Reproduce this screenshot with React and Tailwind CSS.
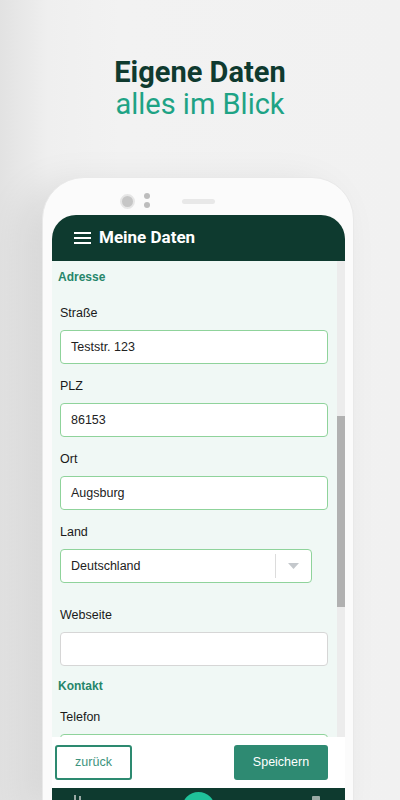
import React from 'react';

function Field({ label, value, border = 'border-[#8fd39b]', mt = 'mt-[15px]' }) {
    return (
        <div className={mt}>
            <div className="ml-[2px] h-[14px] text-[12.5px] leading-[14px] text-[#1a1a1a]">{label}</div>
            <div className={`mt-[10px] ml-[2px] flex h-[34px] w-[268px] items-center rounded-[4px] border bg-white px-[10px] text-[12.5px] text-[#222] ${border}`}>
                {value}
            </div>
        </div>
    );
}

function SelectField({ label, value }) {
    return (
        <div className="mt-[15px]">
            <div className="ml-[2px] h-[14px] text-[12.5px] leading-[14px] text-[#1a1a1a]">{label}</div>
            <div className="mt-[10px] ml-[2px] flex h-[34px] w-[252px] items-center rounded-[4px] border border-[#8fd39b] bg-white pl-[10px] text-[12.5px] text-[#222]">
                <span className="flex-1">{value}</span>
                <span className="h-[24px] w-px bg-[#dcdcdc]" />
                <span className="flex w-[35px] justify-center">
                    <svg width="11" height="6" viewBox="0 0 11 6">
                        <path d="M0 0h11L5.5 6z" fill="#c4c8cc" />
                    </svg>
                </span>
            </div>
        </div>
    );
}

export default function App() {
    return (
        <div className="relative h-[800px] w-[400px] overflow-hidden bg-[linear-gradient(to_right,#e2e2e2_0%,#efefef_12%,#f2f2f2_30%,#f1f1f1_100%)]">
            {/* Headline */}
            <div className="pt-[56px] text-center font-['Roboto',sans-serif] text-[29px] leading-[32px]">
                <div className="font-bold text-[#0f3a2f]">Eigene Daten</div>
                <div className="text-[#1ea385]">alles im Blick</div>
            </div>

            {/* Phone */}
            <div className="mt-[57px] ml-[42px] w-[312px] rounded-t-[42px] border border-[#e9e9e9] bg-[#fbfbfb] pl-[9px] pr-[8px] shadow-[-18px_10px_40px_rgba(0,0,0,0.10)]">
                <div className="relative flex h-[37px] items-center">
                    <div className="absolute top-[16px] left-[68px] h-[15px] w-[15px] rounded-full border-[2px] border-[#e6e6e6] bg-[#c6c6c6]" />
                    <div className="absolute top-[15px] left-[92px] h-[6px] w-[6px] rounded-full bg-[#bdbdbd]" />
                    <div className="absolute top-[24px] left-[92px] h-[6px] w-[6px] rounded-full bg-[#bdbdbd]" />
                    <div className="absolute top-[21px] left-[130px] h-[5px] w-[33px] rounded-full bg-[#e8e8e8]" />
                </div>

                {/* Screen */}
                <div className="flex w-[293px] flex-col overflow-hidden">
                    <div className="flex h-[46px] items-center rounded-t-[24px] bg-[#0e3a2f] pl-[22px] font-['Roboto',sans-serif]">
                        <svg width="17" height="14" viewBox="0 0 17 14">
                            <rect x="0" y="1" width="17" height="2" fill="#fff" />
                            <rect x="0" y="6" width="17" height="2" fill="#fff" />
                            <rect x="0" y="11" width="17" height="2" fill="#fff" />
                        </svg>
                        <span className="ml-[8px] text-[17px] font-bold text-white">Meine Daten</span>
                    </div>

                    <div className="flex h-[476px] font-['Liberation_Sans',Arial,sans-serif]">
                        <div className="w-[285px] overflow-hidden bg-[#f0f8f5] pt-[8px] pl-[6px]">
                            <div className="h-[16px] text-[12px] font-bold leading-[16px] text-[#26866b]">Adresse</div>
                            <Field label="Straße" value="Teststr. 123" mt="mt-[21px]" />
                            <Field label="PLZ" value="86153" />
                            <Field label="Ort" value="Augsburg" />
                            <SelectField label="Land" value="Deutschland" />
                            <Field label="Webseite" value="" border="border-[#d6d6d6]" mt="mt-[25px]" />
                            <div className="mt-[12px] h-[16px] text-[12px] font-bold leading-[16px] text-[#26866b]">Kontakt</div>
                            <Field label="Telefon" value="" mt="mt-[16px]" />
                        </div>
                        <div className="w-[8px] bg-[#ececec] pt-[155px]">
                            <div className="h-[191px] bg-[#b1b1b1]" />
                        </div>
                    </div>

                    <div className="flex h-[51px] items-center justify-between bg-white pl-[3px] pr-[17px] font-['Liberation_Sans',Arial,sans-serif] text-[12.5px]">
                        <button className="h-[35px] w-[77px] rounded-[3px] border-[2px] border-[#2d8a70] bg-white text-[#3d937d]">zurück</button>
                        <button className="h-[35px] w-[94px] rounded-[3px] bg-[#2e8a72] text-white">Speichern</button>
                    </div>

                    <div className="relative flex h-[20px] justify-center bg-[#0e3a2f]">
                        <div className="mt-[4px] h-[33px] w-[33px] rounded-full bg-[#1fc29a]" />
                        <div className="absolute top-[7px] left-[22px] h-[6px] w-[2px] bg-[#9aa9a4]" />
                        <div className="absolute top-[8px] left-[27px] h-[5px] w-[2px] bg-[#9aa9a4]" />
                        <div className="absolute top-[8px] right-[25px] h-[5px] w-[8px] rounded-[1px] bg-[#9aa9a4]" />
                    </div>
                </div>
            </div>
        </div>
    );
}
